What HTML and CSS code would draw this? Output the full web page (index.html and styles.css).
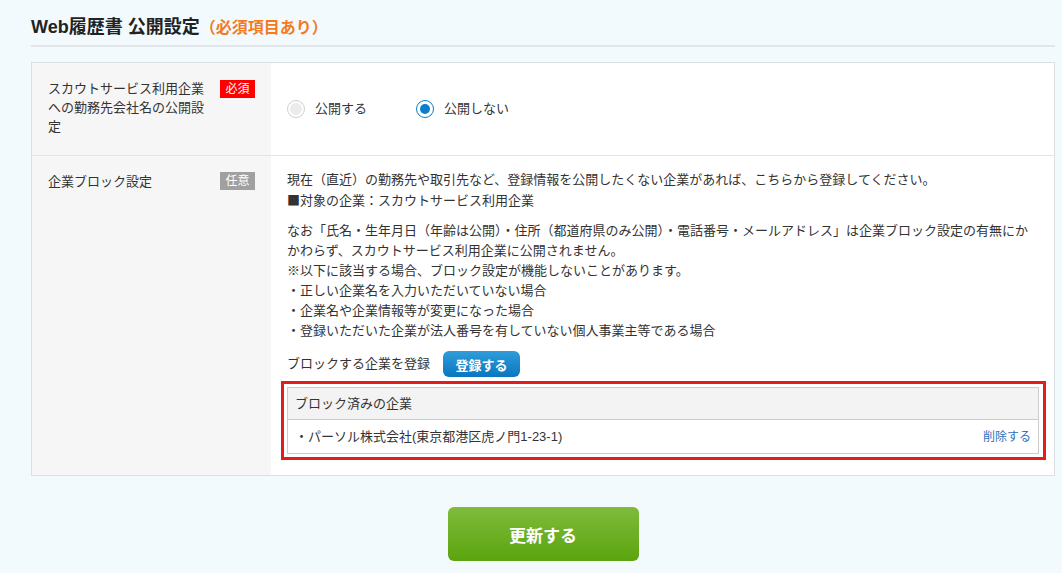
FILE: index.html
```html
<!DOCTYPE html>
<html lang="ja">
<head>
  <meta charset="UTF-8">
  <meta name="viewport" content="width=device-width, initial-scale=1.0">
  <title>Web履歴書 公開設定</title>
  <link rel="stylesheet" href="styles.css">
</head>
<body>
  <div class="page">
    <h1 class="section-title">Web履歴書 公開設定<span class="required-note">（必須項目あり）</span></h1>

    <div class="setting-table">
      <!-- 勤務先会社名の公開設定 -->
      <div class="setting-row">
        <div class="setting-label">
          <span class="label-text">スカウトサービス利用企業への勤務先会社名の公開設定</span>
          <span class="badge badge-required">必須</span>
        </div>
        <div class="setting-body setting-radios">
          <label class="radio">
            <span class="radio-mark"></span>
            <span>公開する</span>
          </label>
          <label class="radio is-checked">
            <span class="radio-mark"></span>
            <span>公開しない</span>
          </label>
        </div>
      </div>

      <!-- 企業ブロック設定 -->
      <div class="setting-row">
        <div class="setting-label">
          <span class="label-text">企業ブロック設定</span>
          <span class="badge badge-optional">任意</span>
        </div>
        <div class="setting-body">
          <p>現在（直近）の勤務先や取引先など、登録情報を公開したくない企業があれば、こちらから登録してください。<br><span class="cjk">■</span>対象の企業：スカウトサービス利用企業</p>
          <p>なお「氏名・生年月日（年齢は公開）・住所（都道府県のみ公開）・電話番号・メールアドレス」は企業ブロック設定の有無にかかわらず、スカウトサービス利用企業に公開されません。<br>
            ※以下に該当する場合、ブロック設定が機能しないことがあります。<br>
            ・正しい企業名を入力いただいていない場合<br>
            ・企業名や企業情報等が変更になった場合<br>
            ・登録いただいた企業が法人番号を有していない個人事業主等である場合</p>

          <div class="block-register">
            <span>ブロックする企業を登録</span>
            <button class="btn-register">登録する</button>
          </div>

          <div class="highlight">
            <div class="block-list">
              <div class="block-list-head">ブロック済みの企業</div>
              <div class="block-list-item">
                <span>・パーソル株式会社(東京都港区虎ノ門1-23-1)</span>
                <a class="delete-link" href="#">削除する</a>
              </div>
            </div>
          </div>
        </div>
      </div>
    </div>

    <div class="actions">
      <button class="btn-update">更新する</button>
    </div>
  </div>
</body>
</html>
```

FILE: styles.css
```css
body {
  margin: 0;
  background: #f2fafd;
  font-family: "Liberation Sans", "Noto Sans CJK JP", sans-serif;
  font-size: 13px;
  color: #333;
}
.cjk {
  font-family: "Noto Sans CJK JP", sans-serif;
}
.page {
  padding: 0 7px 0 31px;
}
.section-title {
  margin: 0;
  padding: 16px 0 7px;
  font-size: 18px;
  line-height: 22px;
  font-weight: bold;
  color: #222;
  border-bottom: 2px solid #e2e6e9;
}
.required-note {
  font-size: 16px;
  line-height: 1;
  color: #f47a1f;
}

.setting-table {
  margin-top: 15px;
  border: 1px solid #dde0e2;
  background: #fff;
}
.setting-row {
  display: grid;
  grid-template-columns: 239px 1fr;
}
.setting-row + .setting-row {
  border-top: 1px solid #e4e4e4;
}
.setting-label {
  display: flex;
  align-items: flex-start;
  padding: 16px;
  background: #f6f6f6;
  line-height: 19px;
}
.label-text {
  width: 160px;
}
.badge {
  margin-left: auto;
  width: 35px;
  height: 18px;
  margin-top: 1px;
  font-size: 12px;
  line-height: 18px;
  text-align: center;
  color: #fff;
}
.badge-required {
  background: #f00;
}
.badge-optional {
  background: #a0a0a0;
  margin-top: 0;
}

.setting-body {
  padding: 14px 16px 15px 16px;
  line-height: 20px;
}
.setting-body p {
  margin: 0 0 10px;
}
.setting-radios {
  display: flex;
  align-items: center;
  padding: 0 16px;
  min-height: 92px;
}
.radio {
  display: flex;
  align-items: center;
  gap: 10px;
  margin-right: 49px;
}
.radio-mark {
  box-sizing: border-box;
  width: 18px;
  height: 18px;
  border: 1px solid #cfcfcf;
  border-radius: 50%;
  background: #fff;
  display: flex;
  align-items: center;
  justify-content: center;
}
.radio-mark::after {
  content: "";
  width: 12px;
  height: 12px;
  border-radius: 50%;
  background: #ebebeb;
}
.radio.is-checked .radio-mark {
  border: 1.5px solid #0b7dcc;
}
.radio.is-checked .radio-mark::after {
  width: 10px;
  height: 10px;
  background: #0b7dcc;
}

.block-register {
  display: flex;
  align-items: center;
  gap: 13px;
}
.btn-register {
  width: 77px;
  height: 26px;
  border: none;
  border-radius: 6px;
  background: linear-gradient(#309cda, #0877c0);
  color: #fff;
  font-family: inherit;
  font-size: 13px;
  font-weight: bold;
  cursor: pointer;
}

/* 赤枠の注釈 */
.highlight {
  margin: 4px -8px 0 -6px;
  border: 3px solid #e11e1e;
  padding: 3px 4px 3px 3px;
}
.block-list {
  border: 1px solid #cccccc;
}
.block-list-head {
  height: 31px;
  line-height: 31px;
  padding: 0 7px;
  background: #f3f3f3;
  border-bottom: 1px solid #cccccc;
}
.block-list-item {
  display: flex;
  align-items: center;
  justify-content: space-between;
  height: 33px;
  padding: 0 7px;
}
.delete-link {
  font-size: 12px;
  color: #2b72b9;
  text-decoration: none;
}

.actions {
  display: flex;
  justify-content: center;
  margin-top: 31px;
}
.btn-update {
  width: 191px;
  height: 54px;
  border: none;
  border-radius: 6px;
  background: linear-gradient(#80bb3c, #5aa40f);
  color: #fff;
  font-family: inherit;
  font-size: 17px;
  font-weight: bold;
  cursor: pointer;
}
```
